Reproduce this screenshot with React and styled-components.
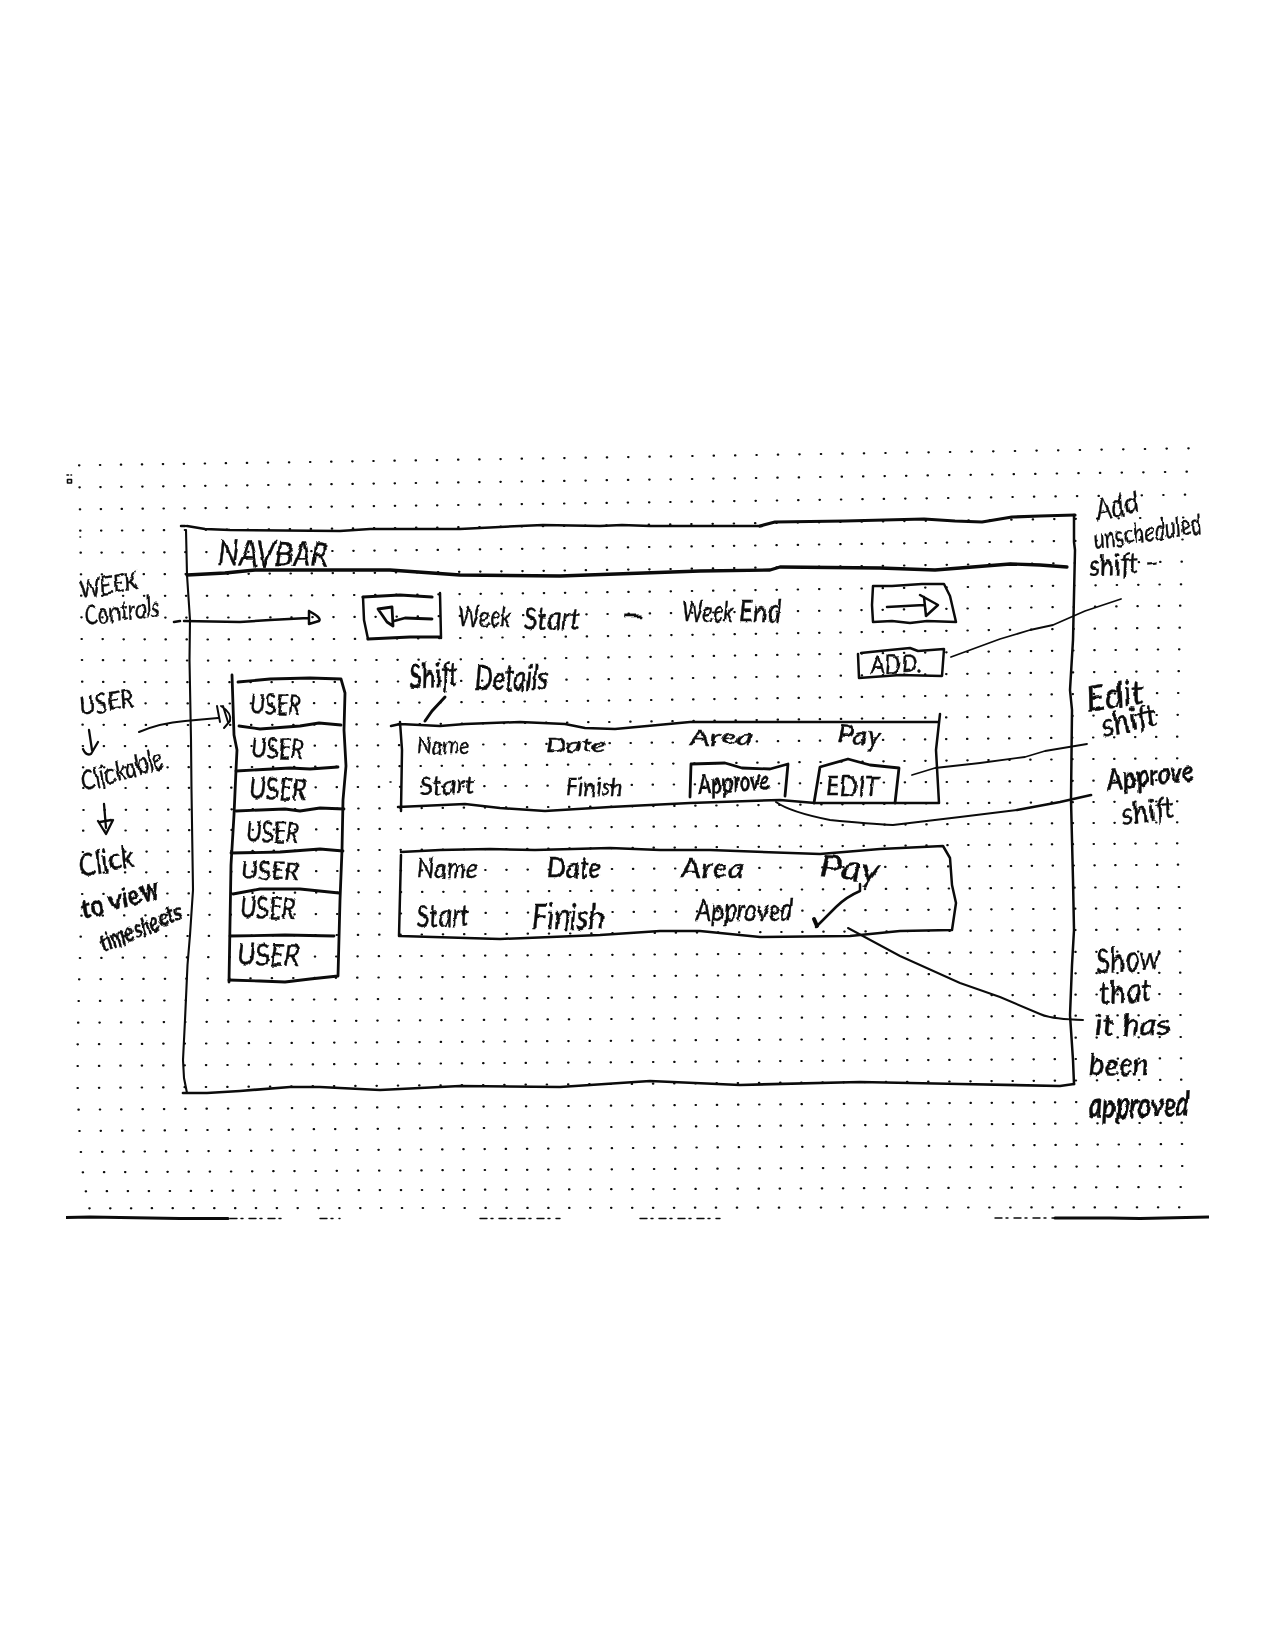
import React, { useLayoutEffect, useRef, useState } from "react";
import styled, { createGlobalStyle } from "styled-components";

const INK = "#0b0b0b";

const GlobalStyle = createGlobalStyle`
  * { box-sizing: border-box; }
  body { margin: 0; background: #fff; color: ${INK}; font-family: Lato, "Open Sans", sans-serif; }
`;

const Page = styled.main`
  height: 1650px;
  padding: 440px 66px 0;
  overflow: hidden;
`;
const Sheet = styled.div`
  position: relative;
  display: grid;
  grid-template-columns: 119px 890px 134px;
  width: 1143px;
  height: 781px;
  overflow: hidden;
`;
const Layer = styled.svg`
  position: absolute;
  inset: 0;
  width: 100%;
  height: 100%;
  overflow: visible;
  pointer-events: none;
  fill: none;
  stroke: ${INK};
  stroke-width: 2.5px;
  stroke-linecap: round;
  stroke-linejoin: round;
`;
const Stroke = styled.path`
  stroke-width: ${(p) => p.$w}px;
`;
const NoteColumn = styled.aside`
  position: relative;
  display: flex;
  flex-direction: column;
  padding-top: ${(p) => p.$top}px;
`;
const NoteLine = styled.div`
  display: flex;
  align-items: flex-start;
  flex: none;
  height: ${(p) => p.$h}px;
`;
const Frame = styled.section`
  position: relative;
  margin-top: 77px;
  height: 575px;
  display: flex;
  flex-direction: column;
`;
const Navbar = styled.header`
  height: 55px;
`;
const Body = styled.div`
  flex: 1;
  display: flex;
`;
const Sidebar = styled.nav`
  width: 177px;
  padding: 106px 0 0 44px;
`;
const UserList = styled.div`
  position: relative;
  width: 117px;
`;
const UserRow = styled.div`
  display: flex;
  align-items: flex-start;
  height: ${(p) => p.$h}px;
`;
const Main = styled.div`
  flex: 1;
  padding-top: 12px;
`;
const WeekBar = styled.div`
  display: flex;
  align-items: flex-start;
  height: 56px;
`;
const ActionBar = styled.div`
  display: flex;
  align-items: flex-start;
  height: 82px;
`;
const Button = styled.button`
  position: relative;
  flex: none;
  display: block;
  width: ${(p) => p.$w}px;
  height: ${(p) => p.$h}px;
  margin: ${(p) => p.$mt || 0}px 0 0 ${(p) => p.$ml || 0}px;
  padding: 0;
  border: 0;
  background: transparent;
  color: inherit;
  font: inherit;
  text-align: left;
`;
const Card = styled.article`
  position: relative;
  display: grid;
  grid-template-columns: 130px 145px 130px 134px;
  grid-template-rows: 38px 47px;
  align-items: start;
  justify-items: start;
  width: ${(p) => p.$w}px;
  height: ${(p) => p.$h}px;
  margin: 0 0 ${(p) => p.$gap || 0}px 38px;
`;
const Word = styled.div`
  flex: none;
  width: ${(p) => p.$w}px;
  height: ${(p) => p.$size}px;
  margin: ${(p) => p.$base - p.$size * 0.887}px 0 0 ${(p) => p.$x}px;
  font-size: ${(p) => p.$size}px;
  font-style: italic;
  font-weight: ${(p) => p.$weight};
  line-height: 1;
  white-space: nowrap;
  -webkit-text-stroke: 0.35px ${INK};
  filter: url(#pen);
`;
const Stretch = styled.span`
  display: inline-block;
  transform-origin: 0 88.7%;
  transform: rotate(${(p) => p.$tilt}deg) scaleX(${(p) => p.$k});
`;

function Ink({ children, x = 0, base, size, w, tilt = 0, weight = 400 }) {
  const ref = useRef(null);
  const [k, setK] = useState(1);
  useLayoutEffect(() => {
    setK(w / ref.current.offsetWidth);
  }, [w, size, children]);
  return (
    <Word $x={x} $base={base} $size={size} $w={w} $weight={weight}>
      <Stretch ref={ref} $tilt={tilt} $k={k}>{children}</Stretch>
    </Word>
  );
}

function Outline({ box, children }) {
  return <Layer viewBox={box} aria-hidden="true">{children}</Layer>;
}

/* Dotted paper: left and right ends of each row, columns spread between them */
const LEFT_Y = [465.3, 487.3, 509.3, 530.7, 552.7, 574.3, 595.7, 617.3, 639, 660, 681.7, 703, 724.7, 746, 767.3, 788, 810, 830.7, 852, 872.7, 894, 915.7, 936.7, 958, 979.3, 1001, 1022.7, 1044.3, 1066, 1088, 1109.7, 1131, 1152, 1172.3, 1191.3, 1208.3];
const RIGHT_Y = [448.3, 471.7, 494.7, 517.5, 539.5, 561.7, 584.3, 605.7, 627.7, 649.3, 671.2, 693, 714.8, 736.7, 758.3, 780, 801.3, 822.3, 843.3, 864.7, 887, 908, 929.3, 951.3, 972.7, 994, 1015, 1037, 1058.3, 1079.7, 1101.3, 1122.7, 1144, 1166, 1187, 1207.3];
const LEFT_X = [[0, 79], [4, 80.5], [10, 82], [16, 83.3], [20, 82], [24, 79], [27, 77.5], [29, 77.5], [31, 79.3], [32, 80.7], [33, 82.7], [34, 85.7], [35, 89.3]];
const RIGHT_X = [[0, 1188.3], [3, 1183], [7, 1180], [13, 1177], [18, 1177], [21, 1179.5], [27, 1180.5], [33, 1182], [35, 1179]];
const BEND = [[0, -0.02], [9, -0.004], [17, 0.009], [24, 0.0136], [32, 0.006], [35, -0.008]];

function at(table, r) {
  for (let i = 1; i < table.length; i++) {
    const [a, va] = table[i - 1];
    const [b, vb] = table[i];
    if (r <= b) return va + ((vb - va) * (r - a)) / (b - a);
  }
  return table[table.length - 1][1];
}

function dotPath() {
  let d = "";
  LEFT_Y.forEach((ly, r) => {
    const lx = at(LEFT_X, r);
    const rx = at(RIGHT_X, r);
    const bump = 20 * Math.exp(-(((r - 9) / 6) ** 2));
    for (let c = 0; c <= 52; c++) {
      const t = c / 52;
      const x = lx + (rx - lx) * (t + at(BEND, r) * t * (1 - t));
      const y = ly + (RIGHT_Y[r] - ly) * t + bump * t * (1 - t) ** 2;
      d += `M${x.toFixed(1)} ${y.toFixed(1)}h.4`;
    }
  });
  return d;
}
const DOTS = dotPath();

const users = [
  { h: 47, x: 21, base: 36, w: 51, size: 28 },
  { h: 44, x: 22, base: 33, w: 53, size: 28 },
  { h: 42, x: 20, base: 30, w: 57, size: 30 },
  { h: 42, x: 17, base: 31, w: 53, size: 29 },
  { h: 40, x: 12, base: 26, w: 58, size: 25 },
  { h: 45, x: 11, base: 25, w: 55, size: 30 },
  { h: 44, x: 8, base: 27, w: 62, size: 30 },
];

export default function App() {
  return (
    <Page>
      <GlobalStyle />
      <Sheet>
        <Layer viewBox="66 440 1143 781" aria-hidden="true">
          <defs>
            <filter id="pen" x="-20%" y="-80%" width="140%" height="260%">
              <feTurbulence type="fractalNoise" baseFrequency="0.07" numOctaves="2" seed="8" result="n" />
              <feDisplacementMap in="SourceGraphic" in2="n" scale="6" xChannelSelector="R" yChannelSelector="G" />
            </filter>
          </defs>
          <Stroke $w={2.2} d={DOTS} />
        </Layer>

        <NoteColumn $top={130}>
          <NoteLine $h={26}><Ink x={15} base={29} size={25} w={59} tilt={-10}>WEEK</Ink></NoteLine>
          <NoteLine $h={92}><Ink x={20} base={30} size={28} w={75} tilt={-8}>Controls</Ink></NoteLine>
          <NoteLine $h={62}><Ink x={15} base={28} size={26} w={55} tilt={-10}>USER</Ink></NoteLine>
          <NoteLine $h={90}><Ink x={18} base={42} size={28} w={85} tilt={-17}>Clickable</Ink></NoteLine>
          <NoteLine $h={42}><Ink x={15} base={38} size={32} w={56} tilt={-12}>Click</Ink></NoteLine>
          <NoteLine $h={36}><Ink x={18} base={38} size={28} w={81} tilt={-17} weight={700}>to view</Ink></NoteLine>
          <NoteLine $h={60}><Ink x={38} base={35} size={26} w={87} tilt={-23} weight={700}>timesheets</Ink></NoteLine>
        </NoteColumn>

        <Frame>
          <Outline box="185 517 890 575">
            <path d="M181 526L185 526M187 526L205 529 230 530 340 531 370 529 460 529 520 526 543 525 600 526 622 525 650 526 762 526" />
            <Stroke $w={3.2} d="M760 526L775 522 845 521 924 519 955 521 982 522 1012 517 1040 516 1075 515" />
            <Stroke $w={2.1} d="M186 530L187 575 190 620 189.5 660 191 740 191.5 790 193 890 190 935 187.5 965 185 1020 183 1060 184 1078 187 1093" />
            <Stroke $w={3.3} d="M187 575L225 573 255 570 390 570 460 575 560 576 700 571 770 570 780 567 880 568 935 570 1010 564 1040 565 1067 567" />
            <path d="M1074 515L1074 542 1075 550 1073 640 1070 690 1072 710 1071 800 1073 880 1074 930 1072 965 1070 1015 1073 1060 1074 1084" />
            <Stroke $w={2.7} d="M183 1093L207 1093 240 1091 290 1087 320 1087 380 1090 460 1086 560 1087 650 1081 740 1085 860 1082 960 1084 1060 1086 1074 1084" />
          </Outline>
          <Navbar><Ink x={33} base={48} size={35} w={110} tilt={1}>NAVBAR</Ink></Navbar>
          <Body>
            <Sidebar>
              <UserList>
                <Outline box="229 678 117 304">
                  <Stroke $w={2.8} d="M232 675L234 735 237 750 236 770 234 815 231 865 229 982" />
                  <Stroke $w={2.8} d="M238 682L270 679 310 678 341 679 345 693 344 730 346 766 343 800 342 850 340 900 338 976 310 979 285 982 260 981 229 980" />
                  <Stroke $w={2.8} d="M239 726L260 729 300 726 319 723 341 725M236 771L290 768 310 769 338 767M236 811L285 809 300 811 320 808 344 809M231 853L280 852 320 849 343 851M233 894L260 889 300 889 339 893M230 936L285 935 334 936" />
                </Outline>
                {users.map((u, i) => (
                  <UserRow key={i} $h={u.h}>
                    <Ink x={u.x} base={u.base} size={u.size} w={u.w} tilt={1}>USER</Ink>
                  </UserRow>
                ))}
              </UserList>
            </Sidebar>
            <Main>
              <WeekBar>
                <Button $w={79} $h={43} $mt={12} aria-label="Previous week">
                  <Outline box="362 596 79 43">
                    <Stroke $w={3.2} d="M363 597L400 595 432 597M368 639L410 637 440 637" />
                    <path d="M363 597L364 620 368 639M440 593L441 638" />
                    <Stroke $w={2.8} d="M378 609L392 607 393 626 387 622ZM394 621L405 618 432 619" />
                  </Outline>
                </Button>
                <Ink x={17} base={43} size={28} w={53}>Week</Ink>
                <Ink x={13} base={46} size={31} w={56} tilt={-1}>Start</Ink>
                <Ink x={43} base={39} size={24} w={21} weight={900}>—</Ink>
                <Ink x={38} base={38} size={29} w={52}>Week</Ink>
                <Ink x={5} base={38} size={30} w={42}>End</Ink>
                <Button $w={84} $h={39} $mt={1} $ml={91} aria-label="Next week">
                  <Outline box="870 585 84 39">
                    <path d="M871 586L890 586 920 584 942 584 948 596 954 622 925 621 908 623 890 621 871 622 870 605Z" />
                    <path d="M885 607L922 605M918 595L936 605 924 616 922 597" />
                  </Outline>
                </Button>
              </WeekBar>
              <ActionBar>
                <Ink x={48} base={49} size={34} w={49} tilt={-4} weight={500}>Shift</Ink>
                <Ink x={16} base={50} size={35} w={73} weight={500}>Details</Ink>
                <Button $w={87} $h={31} $mt={8} $ml={310}>
                  <Outline box="858 648 87 31">
                    <path d="M858 654L859 678 900 675 942 676 944 649 918 651 910 648 880 651 861 653" />
                  </Outline>
                  <Ink x={13} base={25} size={25} w={51} tilt={-2}>ADD.</Ink>
                </Button>
              </ActionBar>
              <Card $w={539} $h={85} $gap={43}>
                <Outline box="400 722 539 85">
                  <path d="M391 726L400 724 440 726 465 724 520 722 565 724 585 728 615 729 690 722 800 722 939 722M400 722L402 750 401 811M398 807L465 804 500 808 545 811 610 807 690 803 780 800 815 803 939 803M940 714L936 750 939 803" />
                </Outline>
                <Ink x={17} base={32} size={24} w={52}>Name</Ink>
                <Ink x={16} base={30} size={20} w={60}>Date</Ink>
                <Ink x={15} base={23} size={21} w={63}>Area</Ink>
                <Ink x={32} base={21} size={27} w={43} tilt={5}>Pay</Ink>
                <Ink x={20} base={36} size={26} w={55} tilt={-3}>Start</Ink>
                <Ink x={36} base={36} size={26} w={57}>Finish</Ink>
                <Button $w={98} $h={38} $mt={3} $ml={15}>
                  <Outline box="690 763 98 38">
                    <Stroke $w={2.8} d="M690 797L691 764 725 763 742 768 770 769 788 764 785 796" />
                  </Outline>
                  <Ink x={9} base={28} size={28} w={71} tilt={-5} weight={700}>Approve</Ink>
                </Button>
                <Button $w={84} $h={43} $ml={10}>
                  <Outline box="815 760 84 43">
                    <Stroke $w={2.8} d="M814 803L820 767 848 759 870 765 899 768 895 803" />
                  </Outline>
                  <Ink x={11} base={32} size={27} w={53}>EDIT</Ink>
                </Button>
              </Card>
              <Card $w={556} $h={88}>
                <Outline box="400 850 556 88">
                  <path d="M401 852L440 850 490 849 535 850 610 848 660 850 710 850 820 854 880 849 943 846 950 858 952 885 956 903 952 930 900 931 850 936 760 937 700 931 660 931 600 935 500 939 400 936M401 855L399 936" />
                  <path d="M860 884v7q-14 6-24 16t-20 20" />
                  <Stroke $w={4} d="M814 919l3 7" />
                </Outline>
                <Ink x={17} base={28} size={27} w={61}>Name</Ink>
                <Ink x={17} base={28} size={29} w={54} weight={500}>Date</Ink>
                <Ink x={6} base={28} size={27} w={64}>Area</Ink>
                <Ink x={14} base={27} size={31} w={61} tilt={4}>Pay</Ink>
                <Ink x={17} base={40} size={31} w={53} tilt={-3}>Start</Ink>
                <Ink x={2} base={41} size={34} w={72}>Finish</Ink>
                <Ink x={21} base={33} size={31} w={96} weight={500}>Approved</Ink>
              </Card>
            </Main>
          </Body>
        </Frame>

        <NoteColumn $top={50}>
          <NoteLine $h={26}><Ink x={23} base={31} size={30} w={42} tilt={-12}>Add</Ink></NoteLine>
          <NoteLine $h={34}><Ink x={20} base={34} size={28} w={109} tilt={-9}>unscheduled</Ink></NoteLine>
          <NoteLine $h={124}><Ink x={15} base={27} size={29} w={71} tilt={-5}>shift –</Ink></NoteLine>
          <NoteLine $h={26}><Ink x={13} base={38} size={35} w={58} tilt={-9}>Edit</Ink></NoteLine>
          <NoteLine $h={64}><Ink x={29} base={38} size={32} w={57} tilt={-14}>shift</Ink></NoteLine>
          <NoteLine $h={28}><Ink x={33} base={27} size={30} w={87} tilt={-7} weight={700}>Approve</Ink></NoteLine>
          <NoteLine $h={148}><Ink x={48} base={34} size={30} w={53} tilt={-10}>shift</Ink></NoteLine>
          <NoteLine $h={36}><Ink x={22} base={34} size={34} w={64} tilt={-5}>Show</Ink></NoteLine>
          <NoteLine $h={36}><Ink x={25} base={29} size={32} w={53} tilt={-5}>that</Ink></NoteLine>
          <NoteLine $h={38}><Ink x={20} base={24} size={30} w={75} tilt={-1} weight={500}>it has</Ink></NoteLine>
          <NoteLine $h={38}><Ink x={14} base={26} size={31} w={60} tilt={-1} weight={500}>been</Ink></NoteLine>
          <NoteLine $h={50}><Ink x={14} base={30} size={35} w={100} tilt={-1} weight={700}>approved</Ink></NoteLine>
        </NoteColumn>

        <Layer viewBox="66 440 1143 781" aria-hidden="true">
          <path d="M174 622L180 621M184 621L240 622 270 620 308 618M309 611L309 624 319 621Q322 618 309 611" />
          <Stroke $w={2} d="M139 732Q160 723 185 721L218 718M217 706L220 722M221 706Q232 713 230 721L224 728M223 706L228 722" />
          <Stroke $w={2.3} d="M89 730L92 750M83 749Q86 756 91 754L98 742M104 804L106 828M98 821L106 834 113 820M100 822L111 820" />
          <Stroke $w={3} d="M425 721L432 711 445 697" />
          <Stroke $w={1.8} d="M951 657L1000 639 1030 630 1053 625 1085 611 1121 599M912 775L935 768 980 763 1025 757 1045 751 1087 744" />
          <Stroke $w={2} d="M776 802Q790 812 830 820Q870 824 893 825L960 817 1017 810M848 928L900 956 960 983 1000 997 1040 1014Q1050 1019 1083 1020" />
          <Stroke $w={2.7} d="M1017 810L1060 802 1091 795" />
          <Stroke $w={3} d="M66 1217.5L90 1217 120 1217.5 180 1218.5 228 1218.5M1055 1218L1110 1218 1140 1218.5 1209 1217" />
          <Stroke $w={1.4} strokeDasharray="7 4 2 6" d="M230 1218.5H285M320 1218.5H340M480 1218.5H560M640 1218.5H720M995 1218H1055" />
          <Stroke $w={1.6} d="M67.5 479.5h4v3.5h-4zM67 475h1.5M71 475h.5M80 537h.5M390 782h1" />
        </Layer>
      </Sheet>
    </Page>
  );
}
